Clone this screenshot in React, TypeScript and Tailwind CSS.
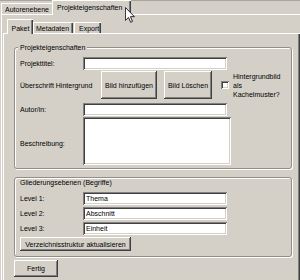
import React from "react";

const raised =
  "bg-[#d4d0c8] shadow-[inset_-1px_-1px_0_#404040,inset_1px_1px_0_#ffffff,inset_-2px_-2px_0_#808080,inset_2px_2px_0_#d4d0c8]";
const sunken =
  "bg-white shadow-[inset_1px_1px_0_#808080,inset_-1px_-1px_0_#ffffff,inset_2px_2px_0_#404040,inset_-2px_-2px_0_#d4d0c8]";
const group =
  "relative w-[278px] rounded-[3px] border border-[#928e86] shadow-[1px_1px_0_#ffffff,inset_1px_1px_0_#ffffff]";

function Input({ w = "w-[144px]", h = "h-[13px]", value = "" }: { w?: string; h?: string; value?: string }) {
  return (
    <div className={`${sunken} ${w} ${h} flex items-center pl-[3px] leading-[9px]`}>{value}</div>
  );
}

export default function App() {
  return (
    <div className="relative w-[300px] h-[280px] overflow-hidden bg-[#d4d0c8] font-['Liberation_Sans',Arial,sans-serif] text-[7px] leading-[9px] text-black flex flex-col">
      <div className="h-[1px] bg-[#a9a59d]" />
      {/* outer tab strip */}
      <div className="h-[13px] flex items-end pl-[1px]">
        <div className="h-[11px] w-[51px] border-l border-t border-white flex items-center pl-[3px]">
          Autorenebene
        </div>
        <div className="relative z-10 -mb-[1px] h-[15px] w-[79px] border-l border-t border-white bg-[#d4d0c8] shadow-[inset_-1px_0_0_#404040,inset_-2px_0_0_#808080] flex items-start pt-[2px] pl-[4px]">
          Projekteigenschaften
        </div>
      </div>
      {/* outer panel */}
      <div className="flex-1 ml-[1px] border-l border-t border-white flex flex-col">
        <div className="h-[18px] flex items-end pl-[5px]">
          <div className="relative z-10 -mb-[1px] h-[15px] w-[26px] border-l border-t border-white bg-[#d4d0c8] shadow-[inset_-1px_0_0_#404040,inset_-2px_0_0_#808080] flex items-start justify-center pt-[4px]">
            Paket
          </div>
          <div className="h-[11px] w-[40px] border-l border-t border-white shadow-[inset_-1px_0_0_#404040,inset_-2px_0_0_#808080] flex items-center pl-[2px]">
            Metadaten
          </div>
          <div className="ml-[1px] h-[11px] w-[27px] border-l border-t border-white shadow-[inset_-1px_0_0_#404040,inset_-2px_0_0_#808080] flex items-center pl-[4px]">
            Export
          </div>
        </div>
        {/* inner panel */}
        <div className="flex-1 ml-[1px] border-l border-t border-white shadow-[inset_-1px_0_0_#404040,inset_-2px_0_0_#808080] pl-[10px] pt-[13px] flex flex-col">
          {/* group 1 */}
          <div className={`${group} h-[122px]`}>
            <span className="absolute left-[3px] -top-[5px] bg-[#d4d0c8] px-[2px] leading-[9px]">
              Projekteigenschaften
            </span>
            <div className="flex flex-col pl-[5px] pt-[9px]">
              <div className="flex items-center h-[13px]">
                <div className="w-[63px]">Projekttitel:</div>
                <Input />
              </div>
              <div className="mt-[1px] flex items-center h-[28px]">
                <div className="w-[81px] whitespace-nowrap">Überschrift Hintergrund</div>
                <div className={`${raised} w-[56px] h-[28px] flex items-center justify-center`}>Bild hinzufügen</div>
                <div className={`${raised} ml-[7px] w-[48px] h-[28px] flex items-center justify-center`}>Bild Löschen</div>
                <div className={`${sunken} ml-[9px] w-[8px] h-[8px]`} />
                <div className="ml-[4px] leading-[9px]">
                  Hintergrundbild
                  <br />
                  als
                  <br />
                  Kachelmuster?
                </div>
              </div>
              <div className="mt-[4px] flex items-center h-[13px]">
                <div className="w-[63px]">Autor/in:</div>
                <Input />
              </div>
              <div className="mt-[1px] flex items-center">
                <div className="w-[63px] pt-[5px]">Beschreibung:</div>
                <Input w="w-[148px]" h="h-[48px]" />
              </div>
            </div>
          </div>
          {/* group 2 */}
          <div className={`${group} mt-[8px] h-[80px] flex flex-col pl-[5px]`}>
            <div className="leading-[9px]">Gliederungsebenen (Begriffe)</div>
            <div className="mt-[5px] flex items-center h-[13px]">
              <div className="w-[63px]">Level 1:</div>
              <Input value="Thema" />
            </div>
            <div className="mt-[2px] flex items-center h-[13px]">
              <div className="w-[63px]">Level 2:</div>
              <Input value="Abschnitt" />
            </div>
            <div className="mt-[2px] flex items-center h-[13px]">
              <div className="w-[63px]">Level 3:</div>
              <Input value="Einheit" />
            </div>
            <div className={`${raised} mt-[2px] w-[111px] h-[14px] flex items-center justify-center whitespace-nowrap`}>
              Verzeichnisstruktur aktualisieren
            </div>
          </div>
          <div className={`${raised} mt-[3px] w-[44px] h-[17px] flex items-center justify-center`}>Fertig</div>
        </div>
      </div>
      {/* mouse cursor */}
      <svg
        className="absolute left-[125px] top-[7px] z-20"
        width="10"
        height="16"
        viewBox="0 0 12 19"
      >
        <path d="M0.5 0.5 L0.5 16 L4.2 12.4 L6.8 18.2 L9 17.2 L6.5 11.5 L11.3 11.5 Z" fill="#ffffff" stroke="#000000" strokeWidth="1" />
      </svg>
    </div>
  );
}
